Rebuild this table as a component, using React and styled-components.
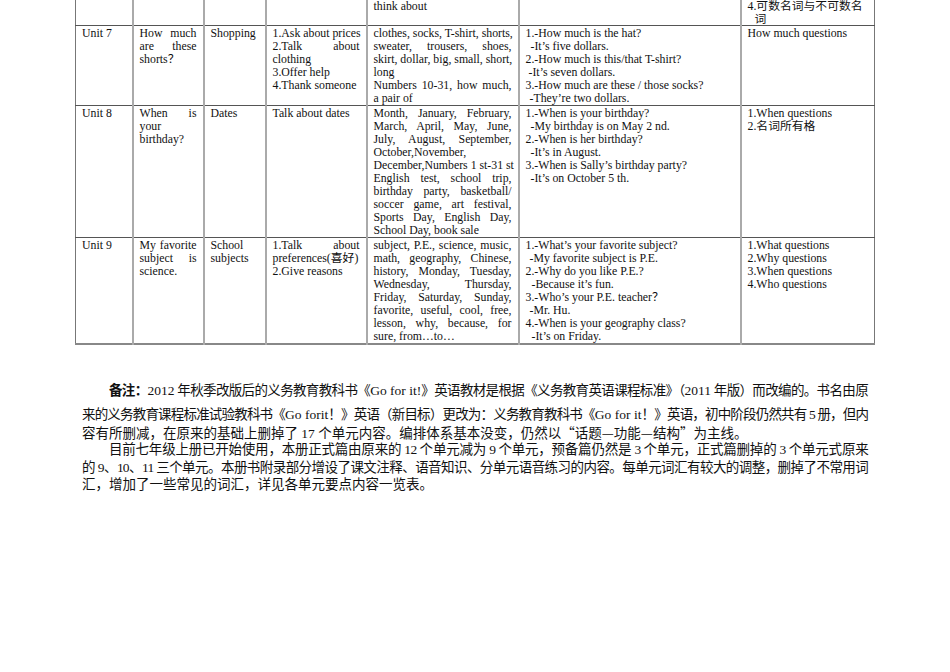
import React from 'react'
import styled, { createGlobalStyle } from 'styled-components'

const GlobalStyle = createGlobalStyle`
    html, body {
        margin: 0;
        padding: 0;
        background: #fff;
    }
    body {
        font-family: "Liberation Serif", "Noto Sans CJK SC", serif;
        color: #111;
    }
`

const StyledPage = styled.div`
    width: 950px;
    height: 672px;
    overflow: hidden;
    padding: 0 0 0 75px;
    box-sizing: border-box;
`
const StyledTable = styled.table`
    width: 799px;
    border-collapse: collapse;
    table-layout: fixed;
    font-size: 11.8px;
    border-bottom: 2px solid #888;
    border-left: 1px solid #777;
    border-right: 1px solid #777;
`
const StyledRow = styled.tr`
    border-top: ${props => props.$first ? 'none' : '1px solid #555'};
`
const StyledCell = styled.td`
    vertical-align: top;
    padding: ${props => props.$first ? '0' : '1px'} 6px 0;
    border-left: 2px solid #aaa;
    &:first-child {
        border-left: none;
    }
`
const Line = styled.div`
    height: ${props => props.$h || 13}px;
    line-height: ${props => props.$h || 13}px;
    padding-left: ${props => props.$indent || 0}px;
    white-space: nowrap;
    text-align: ${props => props.$justify ? 'justify' : 'left'};
    text-align-last: ${props => props.$justify ? 'justify' : 'auto'};
`
const StyledNote = styled.div`
    width: 786px;
    margin: 36px 0 0 7px;
    font-size: 13.5px;
    font-family: "Liberation Serif", "Noto Sans CJK SC", serif;
`
const NoteLine = styled.div`
    height: 17.5px;
    line-height: 17.5px;
    white-space: nowrap;
    padding-left: ${props => props.$indent ? 27 : 0}px;
    margin-bottom: ${props => props.$gap || 0}px;
    letter-spacing: ${props => props.$ls || 0}px;
    text-align: ${props => props.$ls ? 'justify' : 'left'};
    text-align-last: ${props => props.$ls ? 'justify' : 'auto'};
`
const StyledLabel = styled.span`
    font-family: "Noto Sans CJK SC", sans-serif;
    font-weight: bold;
`
const Cjk = styled.span`
    font-family: "Noto Sans CJK SC", sans-serif;
`
const Latin = styled.span`
    letter-spacing: 0;
`

const cols = [57, 71, 62, 101, 152, 222, 134]

const J = t => ({ t, j: true })
const I = (t, i) => ({ t, i })

const rows = [
    {
        first: true,
        cells: [[], [], [], [], ['think about'], [], ['4.可数名词与不可数名', I('词', 7)]]
    },
    {
        cells: [
            ['Unit 7'],
            [J('How much'), J('are these'), 'shorts？'],
            ['Shopping'],
            ['1.Ask about prices', J('2.Talk about'), 'clothing', '3.Offer help', '4.Thank someone'],
            [J('clothes, socks, T-shirt, shorts,'), J('sweater, trousers, shoes,'), J('skirt, dollar, big, small, short,'), 'long', J('Numbers 10-31, how much,'), 'a pair of'],
            ['1.-How much is the hat?', I('-It’s five dollars.', 5), '2.-How much is this/that T-shirt?', I('-It’s seven dollars.', 3), '3.-How much are these / those socks?', I('-They’re two dollars.', 4)],
            ['How much questions']
        ]
    },
    {
        cells: [
            ['Unit 8'],
            [J('When is'), 'your', 'birthday?'],
            ['Dates'],
            ['Talk about dates'],
            [J('Month, January, February,'), J('March, April, May, June,'), J('July, August, September,'), 'October,November,', J('December,Numbers 1 st-31 st'), J('English test, school trip,'), J('birthday party, basketball/'), J('soccer game, art festival,'), J('Sports Day, English Day,'), 'School Day, book sale'],
            ['1.-When is your birthday?', I('-My birthday is on May 2 nd.', 5), '2.-When is her birthday?', I('-It’s in August.', 5), '3.-When is Sally’s birthday party?', I('-It’s on October 5 th.', 5)],
            ['1.When questions', '2.名词所有格']
        ]
    },
    {
        cells: [
            ['Unit 9'],
            [J('My favorite'), J('subject is'), 'science.'],
            ['School', 'subjects'],
            [J('1.Talk about'), 'preferences(喜好)', '2.Give reasons'],
            [J('subject, P.E., science, music,'), J('math, geography, Chinese,'), J('history, Monday, Tuesday,'), J('Wednesday, Thursday,'), J('Friday, Saturday, Sunday,'), J('favorite, useful, cool, free,'), J('lesson, why, because, for'), 'sure, from…to…'],
            ['1.-What’s your favorite subject?', I('-My favorite subject is P.E.', 4), '2.-Why do you like P.E.?', I('-Because it’s fun.', 6), '3.-Who’s your P.E. teacher？', I('-Mr. Hu.', 4), '4.-When is your geography class?', I('-It’s on Friday.', 6)],
            ['1.What questions', '2.Why questions', '3.When questions', '4.Who questions']
        ]
    }
]

const renderLine = (item, i, first) => {
    const h = first ? 12.5 : 13
    if (typeof item === 'string') return <Line key={i} $h={h}>{item}</Line>
    return <Line key={i} $h={h} $justify={item.j} $indent={item.i}>{item.t}</Line>
}

const App = () => {
    return (
        <StyledPage>
            <GlobalStyle />
            <StyledTable>
                <colgroup>
                    {cols.map((w, i) => <col key={i} style={{ width: w }} />)}
                </colgroup>
                <tbody>
                    {rows.map((row, r) => (
                        <StyledRow key={r} $first={row.first}>
                            {row.cells.map((lines, c) => (
                                <StyledCell key={c} $first={row.first}>
                                    {lines.map((l, i) => renderLine(l, i, row.first))}
                                </StyledCell>
                            ))}
                        </StyledRow>
                    ))}
                </tbody>
            </StyledTable>
            <StyledNote>
                <NoteLine $indent $ls={-0.7} $gap={7.5}>
                    <StyledLabel>备注：</StyledLabel><Latin>2012</Latin> 年秋季改版后的义务教育教科书《<Latin>Go for it!</Latin>》英语教材是根据《义务教育英语课程标准》（<Latin>2011</Latin> 年版）而改编的。书名由原
                </NoteLine>
                <NoteLine $ls={-0.95}>来的义务教育课程标准试验教科书《<Latin>Go forit</Latin>！》英语（新目标）更改为：义务教育教科书《<Latin>Go for it</Latin>！》英语，初中阶段仍然共有 5 册，但内</NoteLine>
                <NoteLine>容有所删减，在原来的基础上删掉了 17 个单元内容。编排体系基本没变，仍然以<Cjk>“话题—功能—结构”</Cjk>为主线。</NoteLine>
                <NoteLine $indent $ls={-0.7}>目前七年级上册已开始使用，本册正式篇由原来的 12 个单元减为 9 个单元，预备篇仍然是 3 个单元，正式篇删掉的 3 个单元式原来</NoteLine>
                <NoteLine $ls={-0.8}>的 9、10、11 三个单元。本册书附录部分增设了课文注释、语音知识、分单元语音练习的内容。每单元词汇有较大的调整，删掉了不常用词</NoteLine>
                <NoteLine>汇，增加了一些常见的词汇，详见各单元要点内容一览表。</NoteLine>
            </StyledNote>
        </StyledPage>
    )
}

export default App
